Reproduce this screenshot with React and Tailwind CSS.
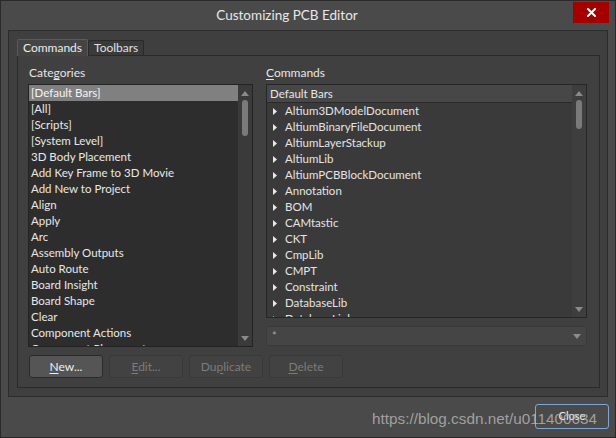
import React from "react";

const categories = [
  "[Default Bars]", "[All]", "[Scripts]", "[System Level]", "3D Body Placement",
  "Add Key Frame to 3D Movie", "Add New to Project", "Align", "Apply", "Arc",
  "Assembly Outputs", "Auto Route", "Board Insight", "Board Shape", "Clear",
  "Component Actions", "Component Placement",
];

const commands = [
  "Altium3DModelDocument", "AltiumBinaryFileDocument", "AltiumLayerStackup", "AltiumLib",
  "AltiumPCBBlockDocument", "Annotation", "BOM", "CAMtastic", "CKT", "CmpLib", "CMPT",
  "Constraint", "DatabaseLib", "DatabaseLink",
];

function UpArrow() {
  return (
    <svg width="8" height="5" viewBox="0 0 8 5"><path d="M0 5 L4 0 L8 5 Z" fill="#8a8a8a" /></svg>
  );
}
function DownArrow({ color = "#8a8a8a" }) {
  return (
    <svg width="8" height="5" viewBox="0 0 8 5"><path d="M0 0 L4 5 L8 0 Z" fill={color} /></svg>
  );
}

function ScrollBar({ thumbTop, thumbH, track }) {
  return (
    <div className={`w-[14px] h-full flex flex-col items-center ${track}`}>
      <div className="h-[14px] flex items-center justify-center pt-[2px]"><UpArrow /></div>
      <div className="w-[6px] rounded-[3px] bg-[#7a7a7a]" style={{ marginTop: thumbTop, height: thumbH }} />
      <div className="flex-1" />
      <div className="h-[14px] flex items-center justify-center pb-[2px]"><DownArrow /></div>
    </div>
  );
}

function Btn({ children, enabled }) {
  return (
    <div
      className={`w-[74px] h-[23px] rounded-[3px] border flex items-center justify-center text-[12px] ${
        enabled ? "bg-[#555555] border-[#2a2a2a] text-[#f0f0f0]" : "bg-[#424242] border-[#393939] text-[#7c7c7c]"
      }`}
    >
      {children}
    </div>
  );
}

export default function App() {
  return (
    <div className="w-[616px] h-[438px] bg-[#4a4a4a] border border-[#2a2a2a] flex flex-col relative font-['Lato','Noto_Sans',sans-serif] select-none overflow-hidden">
      {/* Title bar */}
      <div className="h-[29px] flex items-start shrink-0">
        <div className="flex-1 h-[28px] flex items-center justify-center text-[13.5px] text-[#e8e8e8]">
          Customizing PCB Editor
        </div>
        <div className="w-[36px] h-[21px] mt-[1px] mr-[6px] bg-[#a50000] flex items-center justify-center">
          <svg width="9" height="9" viewBox="0 0 9 9">
            <path d="M1 1 L8 8 M8 1 L1 8" stroke="#ffffff" strokeWidth="2" strokeLinecap="square" />
          </svg>
        </div>
      </div>

      {/* Main panel */}
      <div className="mx-[7px] h-[367px] shrink-0 border border-[#2c2c2c] bg-[#3f3f3f] pt-[8px] pl-[8px] pr-[7px] pb-[8px] flex flex-col">
        {/* Tabs */}
        <div className="h-[16px] flex items-end shrink-0 relative z-10">
          <div className="h-[17px] px-[5px] bg-[#444444] border border-b-0 border-[#5a5a5a] rounded-t-[2px] text-[12px] leading-[15px] text-[#ececec] mb-[-1px]">
            Commands
          </div>
          <div className="h-[15px] px-[5px] bg-[#3a3a3a] border border-b-0 border-[#2a2a2a] rounded-t-[2px] text-[12px] leading-[14px] text-[#e0e0e0]">
            Toolbars
          </div>
        </div>

        {/* Tab content */}
        <div className="h-[333px] border border-[#2a2a2a] bg-[#404040] flex flex-col pt-[10px] pl-[10px]">
          <div className="flex gap-[13px]">
            {/* Categories */}
            <div className="w-[225px] flex flex-col">
              <div className="h-[14px] mb-[4px] text-[12px] leading-[14px] text-[#e6e6e6] pl-[1px]">
                Cate<span className="underline underline-offset-2">g</span>ories
              </div>
              <div className="h-[263px] border border-[#232323] bg-[#2d2d2d] flex">
                <div className="flex-1 overflow-hidden">
                  {categories.map((c, i) => (
                    <div
                      key={c}
                      className={`h-[16px] pl-[2px] text-[11.5px] leading-[16px] whitespace-nowrap ${
                        i === 0 ? "bg-[#808080] text-[#f4f4f4]" : "text-[#e8e8e8]"
                      }`}
                    >
                      {c}
                    </div>
                  ))}
                </div>
                <ScrollBar thumbTop="1px" thumbH="36px" track="bg-[#3a3a3a]" />
              </div>
            </div>

            {/* Commands */}
            <div className="w-[321px] flex flex-col">
              <div className="h-[14px] mb-[4px] text-[12px] leading-[14px] text-[#e6e6e6]">
                <span className="underline underline-offset-2">C</span>ommands
              </div>
              <div className="h-[234px] border border-[#262626] bg-[#3a3a3a] flex">
                <div className="flex-1 overflow-hidden flex flex-col">
                  <div className="h-[18px] shrink-0 bg-[#474747] border-b border-[#2a2a2a] pl-[3px] text-[11.5px] leading-[17px] text-[#e6e6e6]">
                    Default Bars
                  </div>
                  {commands.map((c) => (
                    <div key={c} className="h-[16px] shrink-0 flex items-center pl-[6px] gap-[8px] text-[11.5px] text-[#e4e4e4] whitespace-nowrap">
                      <svg width="4" height="7" viewBox="0 0 4 7"><path d="M0 0 L4 3.5 L0 7 Z" fill="#e8e8e8" /></svg>
                      <span className="leading-[16px]">{c}</span>
                    </div>
                  ))}
                </div>
                <ScrollBar thumbTop="1px" thumbH="29px" track="bg-[#3e3e3e]" />
              </div>
              <div className="mt-[8px] h-[20px] rounded-[3px] border border-[#3a3a3a] bg-[#454545] flex items-center pl-[5px] pr-[5px]">
                <span className="flex-1 text-[11px] text-[#a8a8a8] leading-[16px]">*</span>
                <DownArrow color="#8c8c8c" />
              </div>
            </div>
          </div>

          {/* Buttons */}
          <div className="flex gap-[6px] mt-[8px] pl-[1px]">
            <Btn enabled>
              <span><span className="underline underline-offset-2">N</span>ew...</span>
            </Btn>
            <Btn>
              <span><span className="underline underline-offset-2">E</span>dit...</span>
            </Btn>
            <Btn>
              <span>Du<span className="underline underline-offset-2">p</span>licate</span>
            </Btn>
            <Btn>
              <span><span className="underline underline-offset-2">D</span>elete</span>
            </Btn>
          </div>
        </div>
      </div>

      {/* Bottom */}
      <div className="flex-1 flex justify-end items-start pt-[7px] pr-[6px]">
        <div className="w-[74px] h-[25px] rounded-[3px] border border-[#7da6d6] bg-[#4a4a4a] flex items-center justify-center text-[11px] text-[#f0f0f0]">
          Close
        </div>
      </div>

      {/* Watermark */}
      <div className="absolute left-[371px] top-[409px] text-[15.3px] leading-[18px] text-[#b8b8b8]/80 font-['Liberation_Sans',Arial,sans-serif] whitespace-nowrap pointer-events-none">
        https://blog.csdn.net/u011400634
      </div>
    </div>
  );
}
